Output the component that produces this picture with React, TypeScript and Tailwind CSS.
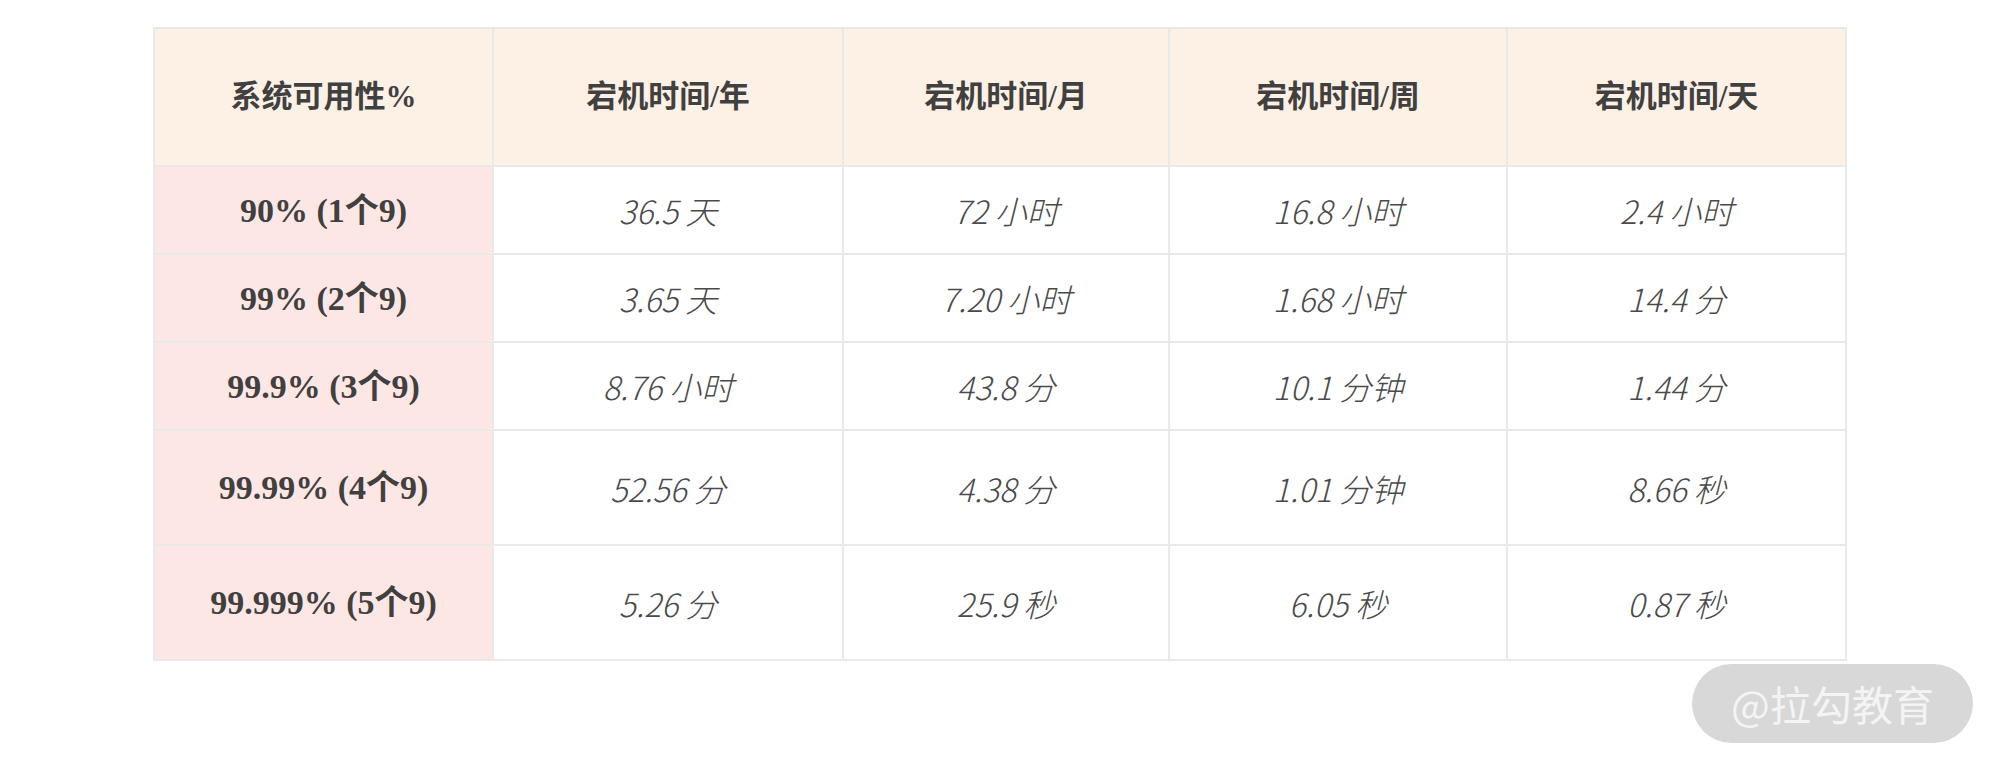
import React from "react";

type Row = { label: string; year: string; month: string; week: string; day: string; tall?: boolean };

const rows: Row[] = [
  { label: "90% (1个9)", year: "36.5 天", month: "72 小时", week: "16.8 小时", day: "2.4 小时" },
  { label: "99% (2个9)", year: "3.65 天", month: "7.20 小时", week: "1.68 小时", day: "14.4 分" },
  { label: "99.9% (3个9)", year: "8.76 小时", month: "43.8 分", week: "10.1 分钟", day: "1.44 分" },
  { label: "99.99% (4个9)", year: "52.56 分", month: "4.38 分", week: "1.01 分钟", day: "8.66 秒", tall: true },
  { label: "99.999% (5个9)", year: "5.26 分", month: "25.9 秒", week: "6.05 秒", day: "0.87 秒", tall: true },
];

const headers = ["系统可用性%", "宕机时间/年", "宕机时间/月", "宕机时间/周", "宕机时间/天"];

const serif = "font-['Liberation_Serif','Noto_Sans_CJK_SC',serif]";
const light = "font-['Noto_Sans_CJK_SC','Noto_Sans',sans-serif]";

const cell = "flex items-center justify-center border-r-2 border-b-2 border-[#e9e9e9]";

export default function App() {
  return (
    <div className="relative w-[2000px] h-[770px] bg-white">
      <div className="pt-[27px] flex justify-center">
        <div className="grid grid-cols-[339px_350px_326px_338px_339px] border-t-2 border-l-2 border-[#e9e9e9] text-[#404040]">
          {headers.map((h) => (
            <div
              key={h}
              className={`${cell} h-[138px] bg-[#fdf0e5] ${serif} font-bold text-[31px]`}
            >
              {h}
            </div>
          ))}
          {rows.map((r) => {
            const height = r.tall ? "h-[115px]" : "h-[88px]";
            return (
              <React.Fragment key={r.label}>
                <div className={`${cell} ${height} bg-[#fde7e5] ${serif} font-bold text-[34px]`}>
                  {r.label}
                </div>
                {[r.year, r.month, r.week, r.day].map((v, i) => (
                  <div
                    key={i}
                    className={`${cell} ${height} bg-white ${light} font-light italic text-[32px] text-[#4a4a4a]`}
                  >
                    {v}
                  </div>
                ))}
              </React.Fragment>
            );
          })}
        </div>
      </div>

      {/* watermark overlay */}
      <div className="absolute left-[1692px] top-[664px] w-[281px] h-[79px] rounded-full bg-[#d8d8d8] flex items-center justify-center">
        <span className="font-['Noto_Sans_CJK_SC',sans-serif] text-[41px] text-[#f4f4f4] leading-none">
          @拉勾教育
        </span>
      </div>
    </div>
  );
}
